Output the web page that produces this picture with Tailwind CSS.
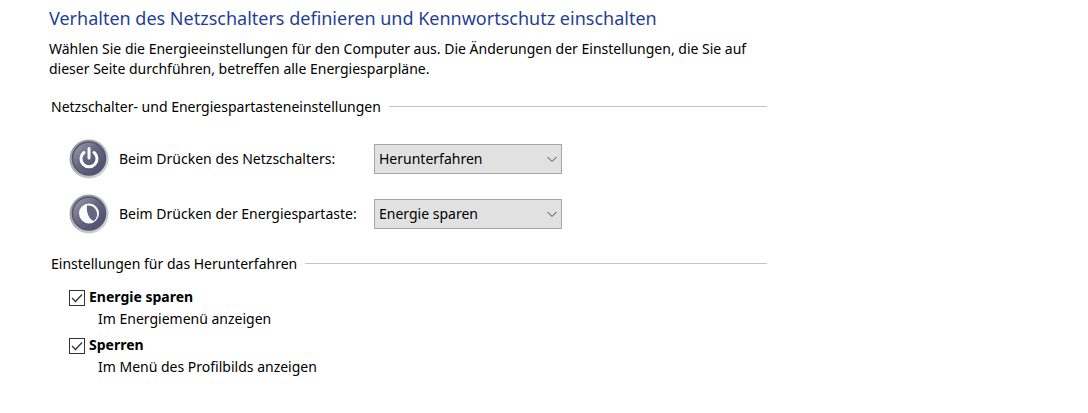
<!DOCTYPE html>
<html lang="de">
<head>
<meta charset="utf-8">
<meta name="viewport" content="width=device-width, initial-scale=1">
<title>Energieoptionen</title>
<script src="https://cdn.jsdelivr.net/npm/@tailwindcss/browser@4"></script>
</head>
<body class="bg-white font-['Noto_Sans',sans-serif] text-sm leading-5 text-black">
<main class="max-w-[767px] pt-1 pl-[49px]">
  <h1 class="text-lg leading-7 text-[#1f3f98]">Verhalten des Netzschalters definieren und Kennwortschutz einschalten</h1>
  <p class="mt-[7px]">Wählen Sie die Energieeinstellungen für den Computer aus. Die Änderungen der Einstellungen, die Sie auf dieser Seite durchführen, betreffen alle Energiesparpläne.</p>

  <section class="mt-[18px] pl-0.5">
    <div class="flex items-center gap-2">
      <h2>Netzschalter- und Energiespartasteneinstellungen</h2>
      <span class="mb-0.5 h-px flex-1 bg-[#c4c4c4]"></span>
    </div>
    <div class="mt-[22px] grid grid-cols-[40px_245px_188px] items-center gap-x-2.5 gap-y-[15px] pl-[18px]">
      <svg class="size-10" viewBox="0 0 40 40" aria-hidden="true">
        <defs>
          <linearGradient id="rim" x1="0" y1="0" x2="1" y2="1">
            <stop offset="0" stop-color="#8e8e96"/><stop offset=".5" stop-color="#b4b4ba"/><stop offset="1" stop-color="#dcdce0"/>
          </linearGradient>
          <linearGradient id="face" x1="0" y1="0" x2="1" y2="1">
            <stop offset="0" stop-color="#a4a4b4"/><stop offset=".45" stop-color="#66667f"/><stop offset="1" stop-color="#4a4a6c"/>
          </linearGradient>
        </defs>
        <circle cx="20" cy="20" r="19.5" fill="url(#rim)"/>
        <circle cx="20" cy="19.5" r="16.5" fill="url(#face)" stroke="#55556c" stroke-width="1.5"/>
        <path d="M15 13.500A8 8 0 1 0 25 13.500M20 9.500V19" fill="none" stroke="#fff" stroke-width="3" stroke-linecap="round"/>
      </svg>
      <label for="power">Beim Drücken des Netzschalters:</label>
      <span class="relative">
        <select id="power" class="block h-[30px] w-full appearance-none border border-[#a6a6a6] bg-[#e1e1e1] pl-1">
          <option>Herunterfahren</option><option>Energie sparen</option>
        </select>
        <svg class="pointer-events-none absolute top-2.5 right-1 size-3" viewBox="0 0 12 12" fill="none" stroke="#444" aria-hidden="true"><path d="M1.500 3L6 7.500L10.500 3"/></svg>
      </span>
      <svg class="size-10" viewBox="0 0 40 40" aria-hidden="true">
        <circle cx="20" cy="20" r="19.5" fill="url(#rim)"/>
        <circle cx="20" cy="19.5" r="16.5" fill="url(#face)" stroke="#55556c" stroke-width="1.5"/>
        <circle cx="20" cy="19.5" r="10" fill="#fff"/>
        <path d="M18 11.500C24 10.500 29 16 28 21.500C27.500 24.500 26 26.500 24.500 27C20 25 17 18 18 11.500Z" fill="#66667f"/>
      </svg>
      <label for="sleep">Beim Drücken der Energiespartaste:</label>
      <span class="relative">
        <select id="sleep" class="block h-[30px] w-full appearance-none border border-[#a6a6a6] bg-[#e1e1e1] pl-1">
          <option>Energie sparen</option><option>Herunterfahren</option>
        </select>
        <svg class="pointer-events-none absolute top-2.5 right-1 size-3" viewBox="0 0 12 12" fill="none" stroke="#444" aria-hidden="true"><path d="M1.500 3L6 7.500L10.500 3"/></svg>
      </span>
    </div>
  </section>

  <section class="mt-5 pl-0.5">
    <div class="flex items-center gap-2">
      <h2>Einstellungen für das Herunterfahren</h2>
      <span class="mb-0.5 h-px flex-1 bg-[#c4c4c4]"></span>
    </div>
    <div class="mt-[13px] grid gap-1.5 pl-[18px]">
      <div>
        <div class="flex items-center gap-1">
          <span class="relative mt-0.5 size-4">
            <input id="show-sleep" type="checkbox" checked aria-describedby="sleep-note" class="peer block size-4 appearance-none border border-[#333] bg-white">
            <svg class="pointer-events-none absolute inset-0 hidden size-4 peer-checked:block" viewBox="0 0 16 16" fill="none" stroke="#333" stroke-width="1.3" aria-hidden="true"><path d="M3 8L6.500 11.500L13 4.500"/></svg>
          </span>
          <label for="show-sleep" class="font-bold">Energie sparen</label>
        </div>
        <p id="sleep-note" class="mt-0.5 pl-[29px]">Im Energiemenü anzeigen</p>
      </div>
      <div>
        <div class="flex items-center gap-1">
          <span class="relative mt-0.5 size-4">
            <input id="show-lock" type="checkbox" checked aria-describedby="lock-note" class="peer block size-4 appearance-none border border-[#333] bg-white">
            <svg class="pointer-events-none absolute inset-0 hidden size-4 peer-checked:block" viewBox="0 0 16 16" fill="none" stroke="#333" stroke-width="1.3" aria-hidden="true"><path d="M3 8L6.500 11.500L13 4.500"/></svg>
          </span>
          <label for="show-lock" class="font-bold">Sperren</label>
        </div>
        <p id="lock-note" class="mt-0.5 pl-[29px]">Im Menü des Profilbilds anzeigen</p>
      </div>
    </div>
  </section>
</main>
</body>
</html>
